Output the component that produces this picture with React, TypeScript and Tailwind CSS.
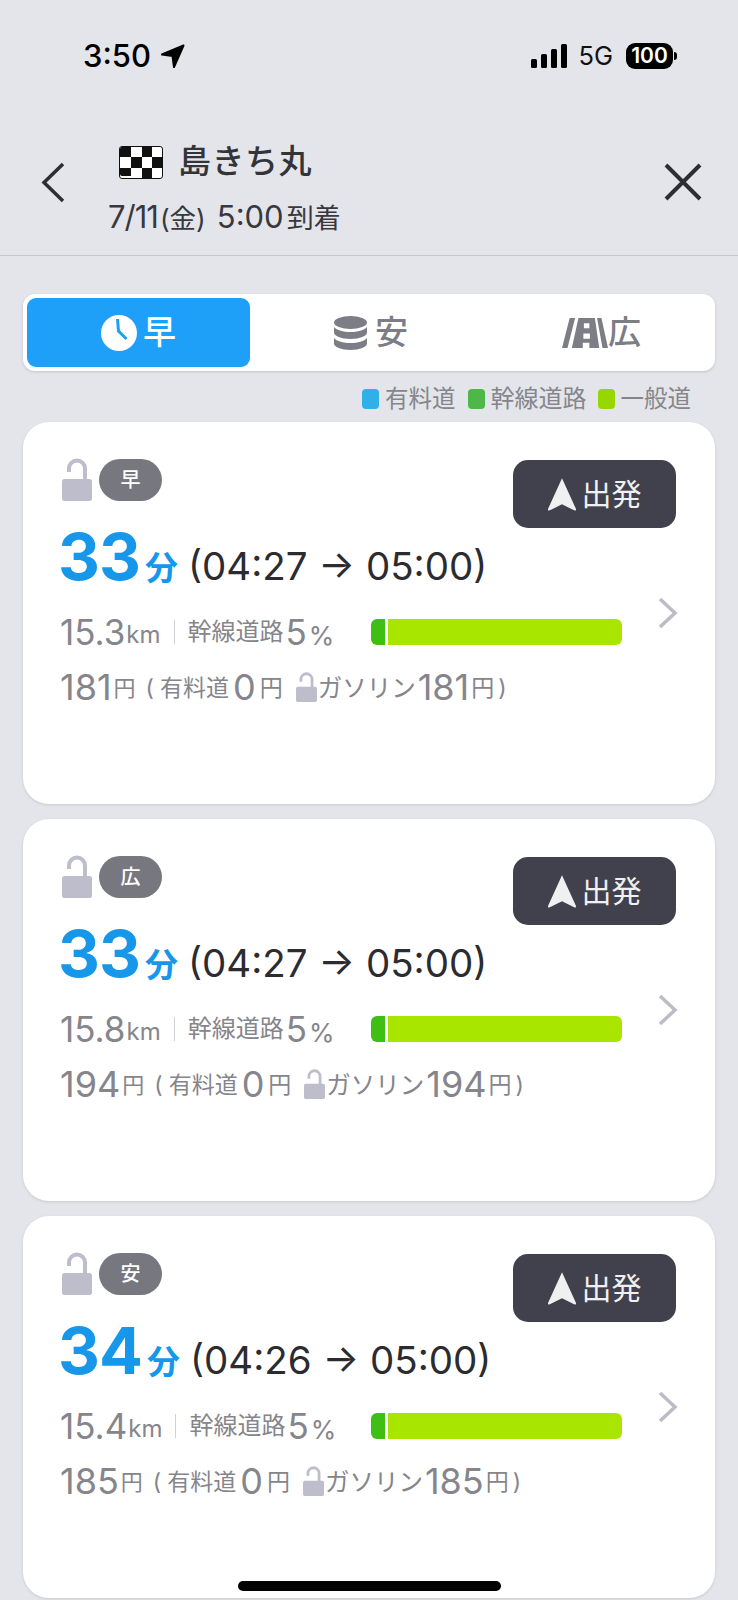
import React from "react";

interface Route {
  tag: string;
  minutes: number;
  from: string;
  km: string;
  yen: number;
}

const routes: Route[] = [
  { tag: "早", minutes: 33, from: "04:27", km: "15.3", yen: 181 },
  { tag: "広", minutes: 33, from: "04:27", km: "15.8", yen: 194 },
  { tag: "安", minutes: 34, from: "04:26", km: "15.4", yen: 185 },
];

const LockIcon = ({ className = "" }: { className?: string }) => (
  <svg className={className} viewBox="0 0 30 43">
    <rect x="0" y="21" width="30" height="22" rx="2.5" fill="#bdbdcb" />
    <path d="M7 14V10.5a8 8 0 0 1 16 0V22" fill="none" stroke="#bdbdcb" strokeWidth="4" />
  </svg>
);

const Flag = () => (
  <svg className="h-[33px] w-[44px]" viewBox="0 0 44 33">
    <rect x="0.5" y="0.5" width="43" height="32" rx="2.5" fill="#fff" stroke="#111" />
    <path d="M1 3a2 2 0 0 1 2-2h9v10H1zM23 1h10v10H23zM12 11h11v11H12zM33 11h10v11H33zM1 22h11v8H3a2 2 0 0 1-2-2zM23 22h10v10H23z" fill="#111" />
  </svg>
);

const ClockIcon = () => (
  <svg className="h-[36px] w-[36px]" viewBox="0 0 36 36">
    <circle cx="18" cy="18" r="18" fill="#fff" />
    <path d="M16.500 4l1 12 8 8" fill="none" stroke="#1fa0f8" strokeWidth="3" />
  </svg>
);

const CoinsIcon = () => (
  <svg className="h-[34px] w-[33px]" viewBox="0 0 33 34" fill="#7d7d85">
    <ellipse cx="16.5" cy="6.5" rx="16.5" ry="6.5" />
    <path d="M0 11c3 3.500 9 5 16.500 5S30 14.500 33 11v5.500c0 3.500-7 6.500-16.500 6.500S0 20 0 16.500z" />
    <path d="M0 22c3 3.500 9 5 16.500 5S30 25.500 33 22v5.500c0 3.500-7 6.500-16.500 6.500S0 31 0 27.500z" />
  </svg>
);

const RoadIcon = () => (
  <svg className="h-[30px] w-[46px]" viewBox="0 0 42 29" fill="#7d7d85" preserveAspectRatio="none">
    <path d="M7 0h5L5 29H0zM32 0h4l6 29h-5z" />
    <path d="M15 0h15l4 29h-9v-5h-6v5H9zM20 5v5h5V5zM19.500 15v5h6v-5z" fillRule="evenodd" />
  </svg>
);

const RouteCard = ({ route }: { route: Route }) => (
  <div className="relative h-[382px] rounded-[26px] bg-white pt-[36px] pr-[39px] pl-[38px] shadow-[0_1px_3px_rgba(0,0,0,0.12)]">
    <div className="flex h-[72px] items-start justify-between">
      <div className="ml-[1px] flex h-[43px] items-center gap-[7px]">
        <LockIcon className="h-[43px] w-[30px]" />
        <span className="flex h-[42px] w-[63px] items-center justify-center rounded-full bg-[#77777f] text-[20px] font-medium text-white">
          {route.tag}
        </span>
      </div>
      <button
        type="button"
        className="mt-[2px] flex h-[68px] w-[163px] shrink-0 items-center justify-center gap-[6px] rounded-[15px] bg-[#41414d] text-[30px] text-[#f0f0f0]"
      >
        <svg className="h-[35px] w-[28px]" viewBox="0 0 30 35" fill="#f0f0f0">
          <path d="M15 0l15 33q.500 2-2 1.500L15 28 2 34.500q-2.500.5-2-1.500z" />
        </svg>
        出発
      </button>
    </div>
    <div className="mt-[-9px] ml-[-3px] flex h-[72px] items-baseline whitespace-nowrap text-[#2b2b30]">
      <span className="text-[65px] leading-[72px] font-bold tracking-[-1px] text-[#1797ea]">{route.minutes}</span>
      <span className="ml-[5px] text-[33px] font-bold text-[#1797ea]">分</span>
      <span className="ml-[10px] text-[38.500px] leading-[72px]">({route.from} → 05:00)</span>
    </div>
    <div className="mt-[21px] ml-[-1px] flex h-[36px] w-[562px] items-center whitespace-nowrap text-[#85858b]">
      <span className="text-[35px]">{route.km}</span>
      <span className="mt-[6px] ml-[1px] text-[24px]">km</span>
      <span className="mx-[13px] h-[24px] w-px bg-[#d0d0d6]" />
      <span className="text-[24px]">幹線道路</span>
      <span className="ml-[2px] text-[35px]">5</span>
      <span className="mt-[6px] ml-[2px] text-[26px]">%</span>
      <div className="ml-auto flex h-[26px] w-[251px] shrink-0 overflow-hidden rounded-[6px]">
        <span className="h-full w-[14px] bg-[#3fbe14]" />
        <span className="ml-[3px] h-full flex-1 bg-[#a8e600]" />
      </div>
    </div>
    <div className="mt-[15px] ml-[-1px] flex h-[44px] items-center whitespace-nowrap text-[#85858b]">
      <span className="text-[36px]">{route.yen}</span>
      <span className="mt-[2px] ml-[2px] text-[22px]">円</span>
      <span className="mt-[2px] ml-[10px] text-[23px]">(</span>
      <span className="mt-[2px] ml-[6px] text-[23px]">有料道</span>
      <span className="ml-[4px] text-[36px]">0</span>
      <span className="mt-[2px] ml-[4px] text-[23px]">円</span>
      <LockIcon className="ml-[13px] h-[30px] w-[21px]" />
      <span className="mt-[2px] ml-[1px] text-[24.500px]">ガソリン</span>
      <span className="ml-[2px] text-[36px]">{route.yen}</span>
      <span className="mt-[2px] ml-[2px] text-[23px]">円</span>
      <span className="mt-[2px] ml-[4px] text-[23px]">)</span>
    </div>
    <svg className="absolute top-[175px] right-[37px] h-[32px] w-[20px]" viewBox="0 0 20 32" fill="none" stroke="#bcbcc6" strokeWidth="3.500">
      <path d="M2 2l15 14L2 30" />
    </svg>
  </div>
);

export default function App() {
  return (
    <div className="relative h-[1600px] w-[738px] overflow-hidden bg-[#e3e5ea] font-[Inter,'Noto_Sans_CJK_JP',sans-serif]">
      {/* status bar */}
      <div className="flex h-[112px] items-center justify-between pr-[61px] pl-[83px]">
        <div className="flex items-center gap-[9px] text-black">
          <span className="text-[31px] leading-[32px] font-medium">3:50</span>
          <svg className="h-[25px] w-[25px]" viewBox="0 0 25 25" fill="#000" stroke="#000" strokeWidth="2" strokeLinejoin="round">
            <path d="M23.500 1.500L2 10.500l10.500 1.500 1.500 11z" />
          </svg>
        </div>
        <div className="flex items-center">
          <div className="flex h-[24px] items-end gap-[4px]">
            <span className="h-[9px] w-[6px] rounded-[1.500px] bg-black" />
            <span className="h-[14px] w-[6px] rounded-[1.500px] bg-black" />
            <span className="h-[19px] w-[6px] rounded-[1.500px] bg-black" />
            <span className="h-[24px] w-[6px] rounded-[1.500px] bg-black" />
          </div>
          <span className="ml-[11px] text-[25.500px] leading-[26px] text-[#111]">5G</span>
          <span className="ml-[13px] flex h-[26px] w-[47px] items-center justify-center rounded-[9px] bg-black text-[21px] font-semibold text-white">100</span>
          <span className="ml-[1px] h-[8px] w-[3px] rounded-r-full bg-black" />
        </div>
      </div>
      {/* header */}
      <div className="mt-[25px] flex h-[119px] border-b border-[#c6c7cb] pr-[36px] pl-[41px]">
        <svg className="mt-[25px] h-[41px] w-[24px]" viewBox="0 0 24 41" fill="none" stroke="#2d2d33" strokeWidth="3.500">
          <path d="M22 2L3 20.500 22 39" />
        </svg>
        <div className="ml-[45px] flex-1">
          <div className="ml-[9px] flex h-[50px] items-center gap-[15px]">
            <Flag />
            <span className="text-[33px] font-medium tracking-[0.5px] text-[#333338]">島きち丸</span>
          </div>
          <div className="mt-[12px] ml-[-2px] flex items-baseline whitespace-nowrap text-[#38383e]">
            <span className="text-[31px] leading-[36px] tracking-[-1px]">7/11</span>
            <span className="ml-[2px] text-[26.500px] leading-[36px]">(金)</span>
            <span className="ml-[11px] text-[31px] leading-[36px]">5:00</span>
            <span className="ml-[3px] text-[27px] leading-[36px]">到着</span>
          </div>
        </div>
        <svg className="mt-[26px] h-[38px] w-[38px]" viewBox="0 0 38 38" fill="none" stroke="#2d2d33" strokeWidth="4">
          <path d="M2 2l34 34M36 2L2 36" />
        </svg>
      </div>
      {/* sort tabs */}
      <div className="mx-[23px] mt-[38px] flex h-[77px] rounded-[12px] bg-white p-[4px] shadow-[0_1px_3px_rgba(0,0,0,0.15)]">
        <div className="flex h-full w-[223px] items-center justify-center gap-[6px] rounded-[9px] bg-[#1fa0f8] text-[33px] font-medium text-white">
          <ClockIcon />
          早
        </div>
        <div className="flex h-full w-[242px] items-center justify-center gap-[8px] text-[33px] font-medium text-[#7d7d85]">
          <CoinsIcon />
          安
        </div>
        <div className="flex h-full flex-1 items-center justify-center text-[33px] font-medium text-[#7d7d85]">
          <RoadIcon />
          広
        </div>
      </div>
      {/* legend */}
      <div className="mt-[17px] flex h-[22px] items-center justify-end pr-[47px] text-[23.500px] whitespace-nowrap text-[#85858b]">
        <span className="h-[20px] w-[17px] rounded-[4px] bg-[#2fb0e8]" />
        <span className="ml-[6px]">有料道</span>
        <span className="ml-[12px] h-[20px] w-[17px] rounded-[4px] bg-[#4db848]" />
        <span className="ml-[6px] text-[24px]">幹線道路</span>
        <span className="ml-[11px] h-[20px] w-[17px] rounded-[4px] bg-[#97d700]" />
        <span className="ml-[6px]">一般道</span>
      </div>
      {/* route cards */}
      <div className="mx-[23px] mt-[12px] flex flex-col gap-[15px]">
        {routes.map((route) => (
          <RouteCard key={route.tag} route={route} />
        ))}
      </div>
      <div className="absolute bottom-[9px] left-[238px] h-[10px] w-[263px] rounded-full bg-black" />
    </div>
  );
}
